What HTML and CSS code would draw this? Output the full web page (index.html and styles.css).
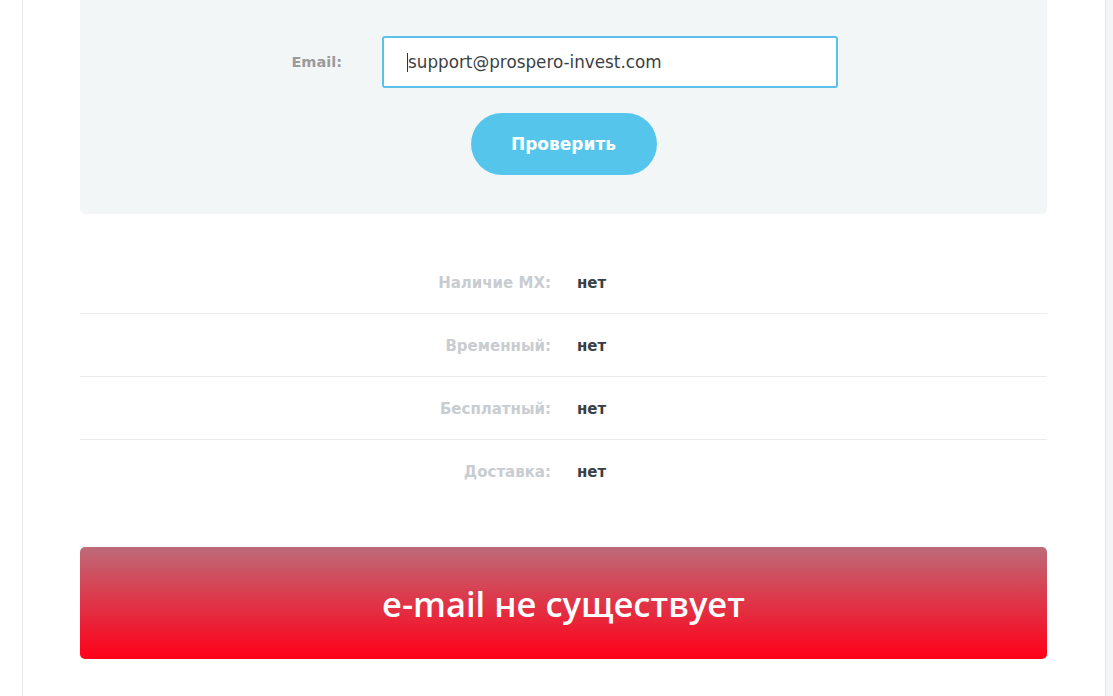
FILE: index.html
```html
<!DOCTYPE html>
<html lang="ru">
<head>
<meta charset="utf-8">
<title>Проверка email</title>
<link rel="stylesheet" href="styles.css">
</head>
<body>
<div class="page">
  <main class="content">
    <section class="check-panel">
      <form class="check-form">
        <div class="field-row">
          <label class="field-label" for="email">Email:</label>
          <div class="field-input" id="email"><span class="caret"></span>support@prospero-invest.com</div>
        </div>
        <button type="button" class="check-btn">Проверить</button>
      </form>
    </section>

    <section class="results">
      <div class="result-row"><span class="result-label">Наличие MX:</span><span class="result-value">нет</span></div>
      <div class="result-row"><span class="result-label">Временный:</span><span class="result-value">нет</span></div>
      <div class="result-row"><span class="result-label">Бесплатный:</span><span class="result-value">нет</span></div>
      <div class="result-row"><span class="result-label">Доставка:</span><span class="result-value">нет</span></div>
    </section>

    <div class="verdict">e-mail не существует</div>
  </main>
  <aside class="side-strip"></aside>
</div>
</body>
</html>
```

FILE: styles.css
```css
html, body {
  margin: 0;
  padding: 0;
  background: #ffffff;
  font-family: "DejaVu Sans", "Noto Sans", sans-serif;
}

.page {
  display: flex;
  height: 696px;
  overflow: hidden;
  padding-left: 22px;
}

.content {
  width: 1083px;
  box-sizing: border-box;
  border-left: 1px solid #e9eaec;
  padding: 0 58px 0 57px;
  display: flex;
  flex-direction: column;
}

.side-strip {
  flex: 1;
  background: #f4f5f7;
  border-left: 1px solid #e6e7ea;
}

.check-panel {
  background: #f2f6f7;
  border-radius: 0 0 5px 5px;
  height: 214px;
  box-sizing: border-box;
  padding-top: 36px;
}

.check-form {
  display: flex;
  flex-direction: column;
  align-items: center;
  gap: 25px;
}

.field-row {
  display: flex;
  align-items: center;
  align-self: stretch;
  padding-left: 162px;
}

.field-label {
  width: 100px;
  text-align: right;
  margin-right: 40px;
  color: #9b9b9b;
  font-weight: 700;
  font-size: 14.5px;
}

.field-input {
  width: 456px;
  height: 52px;
  box-sizing: border-box;
  border: 2px solid #5cc1e8;
  border-radius: 3px;
  background: #fff;
  padding-left: 23px;
  display: flex;
  align-items: center;
  font-size: 16.8px;
  color: #3b3f44;
}

.caret {
  display: inline-block;
  width: 1px;
  height: 19px;
  background: #333;
}

.check-btn {
  width: 186px;
  height: 62px;
  border: none;
  border-radius: 31px;
  background: #55c5ec;
  color: #fff;
  font-family: inherit;
  font-weight: 700;
  font-size: 17px;
  cursor: pointer;
}

.results {
  margin-top: 37px;
  display: flex;
  flex-direction: column;
}

.result-row {
  display: grid;
  grid-template-columns: 471px 1fr;
  column-gap: 26px;
  align-items: center;
  height: 63px;
  box-sizing: border-box;
  border-bottom: 1px solid #ebebeb;
  font-weight: 700;
  font-size: 15px;
  padding-top: 1px;
}

.result-row:last-child {
  border-bottom: none;
}

.result-label {
  text-align: right;
  color: #c9ccd0;
}

.result-value {
  color: #3a3f45;
}

.verdict {
  margin-top: 44px;
  height: 112px;
  border-radius: 5px;
  background: linear-gradient(to bottom, #bd6b79 0%, #dc3a4c 45%, #ff0019 100%);
  color: #fff;
  display: flex;
  align-items: center;
  justify-content: center;
  font-family: "Open Sans", "Noto Sans", sans-serif;
  font-size: 34.5px;
  font-weight: 600;
}
```
